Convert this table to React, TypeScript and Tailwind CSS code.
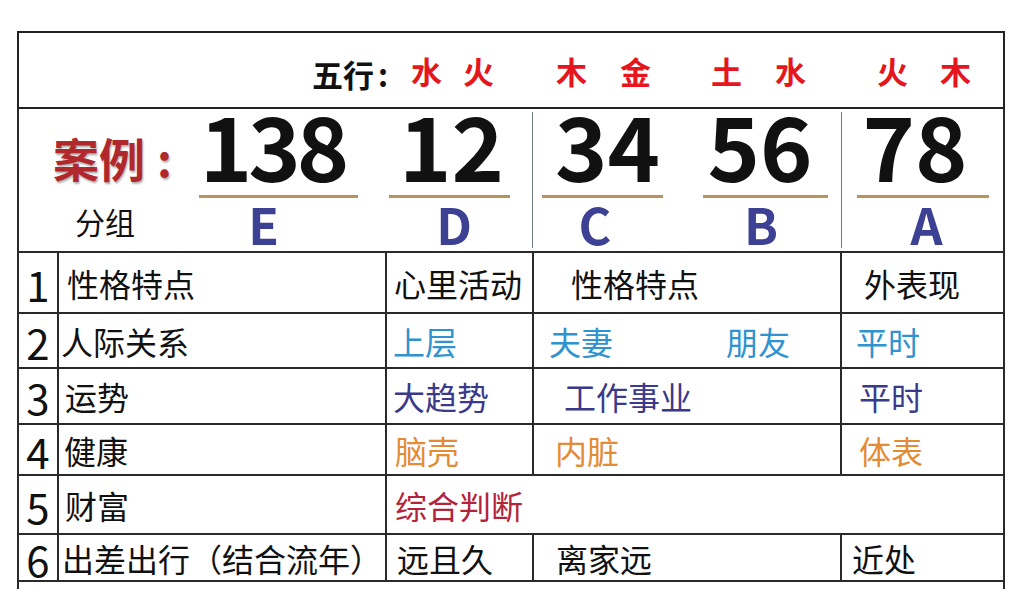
const cjk = "font-['Noto_Sans_CJK_SC',sans-serif]";

const wuxing = [
  { ch: '水', w: 'w-[52px]' },
  { ch: '火', w: 'w-[93px]' },
  { ch: '木', w: 'w-[64px]' },
  { ch: '金', w: 'w-[91px]' },
  { ch: '土', w: 'w-[64px]' },
  { ch: '水', w: 'w-[102px]' },
  { ch: '火', w: 'w-[63px]' },
  { ch: '木', w: 'w-[40px]' },
];

function Group({
  num,
  letter,
  width,
  numPad,
  letterPad,
}: {
  num: string;
  letter: string;
  width: string;
  numPad: string;
  letterPad: string;
}) {
  return (
    <div className={`flex flex-col ${width}`}>
      <div className={`text-center text-[89px] font-bold leading-[70px] text-[#111] ${numPad}`}>{num}</div>
      <div className="mt-[16px] h-[3px] bg-[#b8945c]" />
      <div className={`text-center text-[50px] font-bold leading-[50px] text-[#3d4194] ${letterPad}`}>{letter}</div>
    </div>
  );
}

const cell = 'flex items-center border-r-2 border-b-2 border-[#2a2a2a] text-[32px] leading-none';
const num = `${cell} justify-center pt-[2px] text-[42px]`;

export default function App() {
  return (
    <div className={`min-h-[599px] w-[1031px] bg-white pl-[17px] pt-[31px] ${cjk}`}>
      {/* 五行 header */}
      <div className="flex h-[78px] w-[988px] items-center border-2 border-[#222] pl-[293px] pt-[6px] leading-none">
        <span className="w-[99px] text-[31px] font-bold text-[#111]">
          五行<span className="ml-[4px]">:</span>
        </span>
        {wuxing.map((w, i) => (
          <span key={i} className={`${w.w} mb-[5px] text-[31px] font-bold text-[#e5161d]`}>
            {w.ch}
          </span>
        ))}
      </div>

      {/* 案例 numbers */}
      <div className="flex h-[142px] w-[988px] border-x-2 border-[#2a2a2a]">
        <div className="flex w-[180px] flex-col pl-[34px] pt-[25px]">
          <div className="flex text-[46px] font-bold leading-none text-[#b0282c] [text-shadow:1px_2px_2px_rgba(0,0,0,0.3)]">
            案例<span className="ml-[12px]">:</span>
          </div>
          <div className="mt-[26px] pl-[22px] text-[30px] leading-none text-[#111]">分组</div>
        </div>
        <Group num="138" letter="E" width="w-[159px]" numPad="pr-[12px] tracking-[-4px]" letterPad="pr-[30px]" />
        <div className="ml-[31px]">
          <Group num="12" letter="D" width="w-[121px]" numPad="pl-[4px]" letterPad="pl-[9px]" />
        </div>
        <div className="my-[3px] ml-[22px] w-px bg-[#6f7d82]" />
        <div className="ml-[9px]">
          <Group num="34" letter="C" width="w-[121px]" numPad="pl-[10px]" letterPad="pr-[15px]" />
        </div>
        <div className="ml-[40px]">
          <Group num="56" letter="B" width="w-[125px]" numPad="pr-[11px]" letterPad="pr-[9px]" />
        </div>
        <div className="my-[3px] ml-[13px] w-px bg-[#6f7d82]" />
        <div className="ml-[15px]">
          <Group num="78" letter="A" width="w-[132px]" numPad="pr-[16px]" letterPad="pl-[7px]" />
        </div>
      </div>

      {/* table */}
      <div className="grid w-[988px] grid-cols-[40px_328px_147px_308px_163px] border-l-2 border-t-2 border-[#2a2a2a] text-[#111]">
        {/* row 1 */}
        <div className={`${num} h-[61px]`}>1</div>
        <div className={`${cell} pl-[8px]`}>性格特点</div>
        <div className={`${cell} pl-[7px]`}>心里活动</div>
        <div className={`${cell} pl-[37px]`}>性格特点</div>
        <div className={`${cell} pl-[22px]`}>外表现</div>

        {/* row 2 */}
        <div className={`${num} h-[55px]`}>2</div>
        <div className={`${cell} pl-[2px]`}>人际关系</div>
        <div className={`${cell} pl-[6px] text-[#2f93cf]`}>上层</div>
        <div className={`${cell} pl-[15px] text-[#2f93cf]`}>
          <span className="w-[177px]">夫妻</span>
          <span>朋友</span>
        </div>
        <div className={`${cell} pl-[14px] text-[#2f93cf]`}>平时</div>

        {/* row 3 */}
        <div className={`${num} h-[56px]`}>3</div>
        <div className={`${cell} pl-[6px]`}>运势</div>
        <div className={`${cell} pl-[6px] text-[#3b3a8a]`}>大趋势</div>
        <div className={`${cell} pl-[30px] text-[#3b3a8a]`}>工作事业</div>
        <div className={`${cell} pl-[17px] text-[#3b3a8a]`}>平时</div>

        {/* row 4 */}
        <div className={`${num} h-[51px]`}>4</div>
        <div className={`${cell} pl-[5px]`}>健康</div>
        <div className={`${cell} pl-[8px] text-[#e38b35]`}>脑壳</div>
        <div className={`${cell} pl-[21px] text-[#e38b35]`}>内脏</div>
        <div className={`${cell} pl-[17px] text-[#e38b35]`}>体表</div>

        {/* row 5 */}
        <div className={`${num} h-[59px]`}>5</div>
        <div className={`${cell} pl-[6px]`}>财富</div>
        <div className={`${cell} col-span-3 pl-[8px] text-[#b3243a]`}>综合判断</div>

        {/* row 6 */}
        <div className={`${num} h-[47px]`}>6</div>
        <div className={`${cell} pl-[3px]`}>出差出行（结合流年）</div>
        <div className={`${cell} pl-[10px]`}>远且久</div>
        <div className={`${cell} pl-[22px]`}>离家远</div>
        <div className={`${cell} pl-[10px]`}>近处</div>

        {/* tail */}
        <div className="col-span-5 h-[7px] border-r-2 border-[#2a2a2a]" />
      </div>
    </div>
  );
}
